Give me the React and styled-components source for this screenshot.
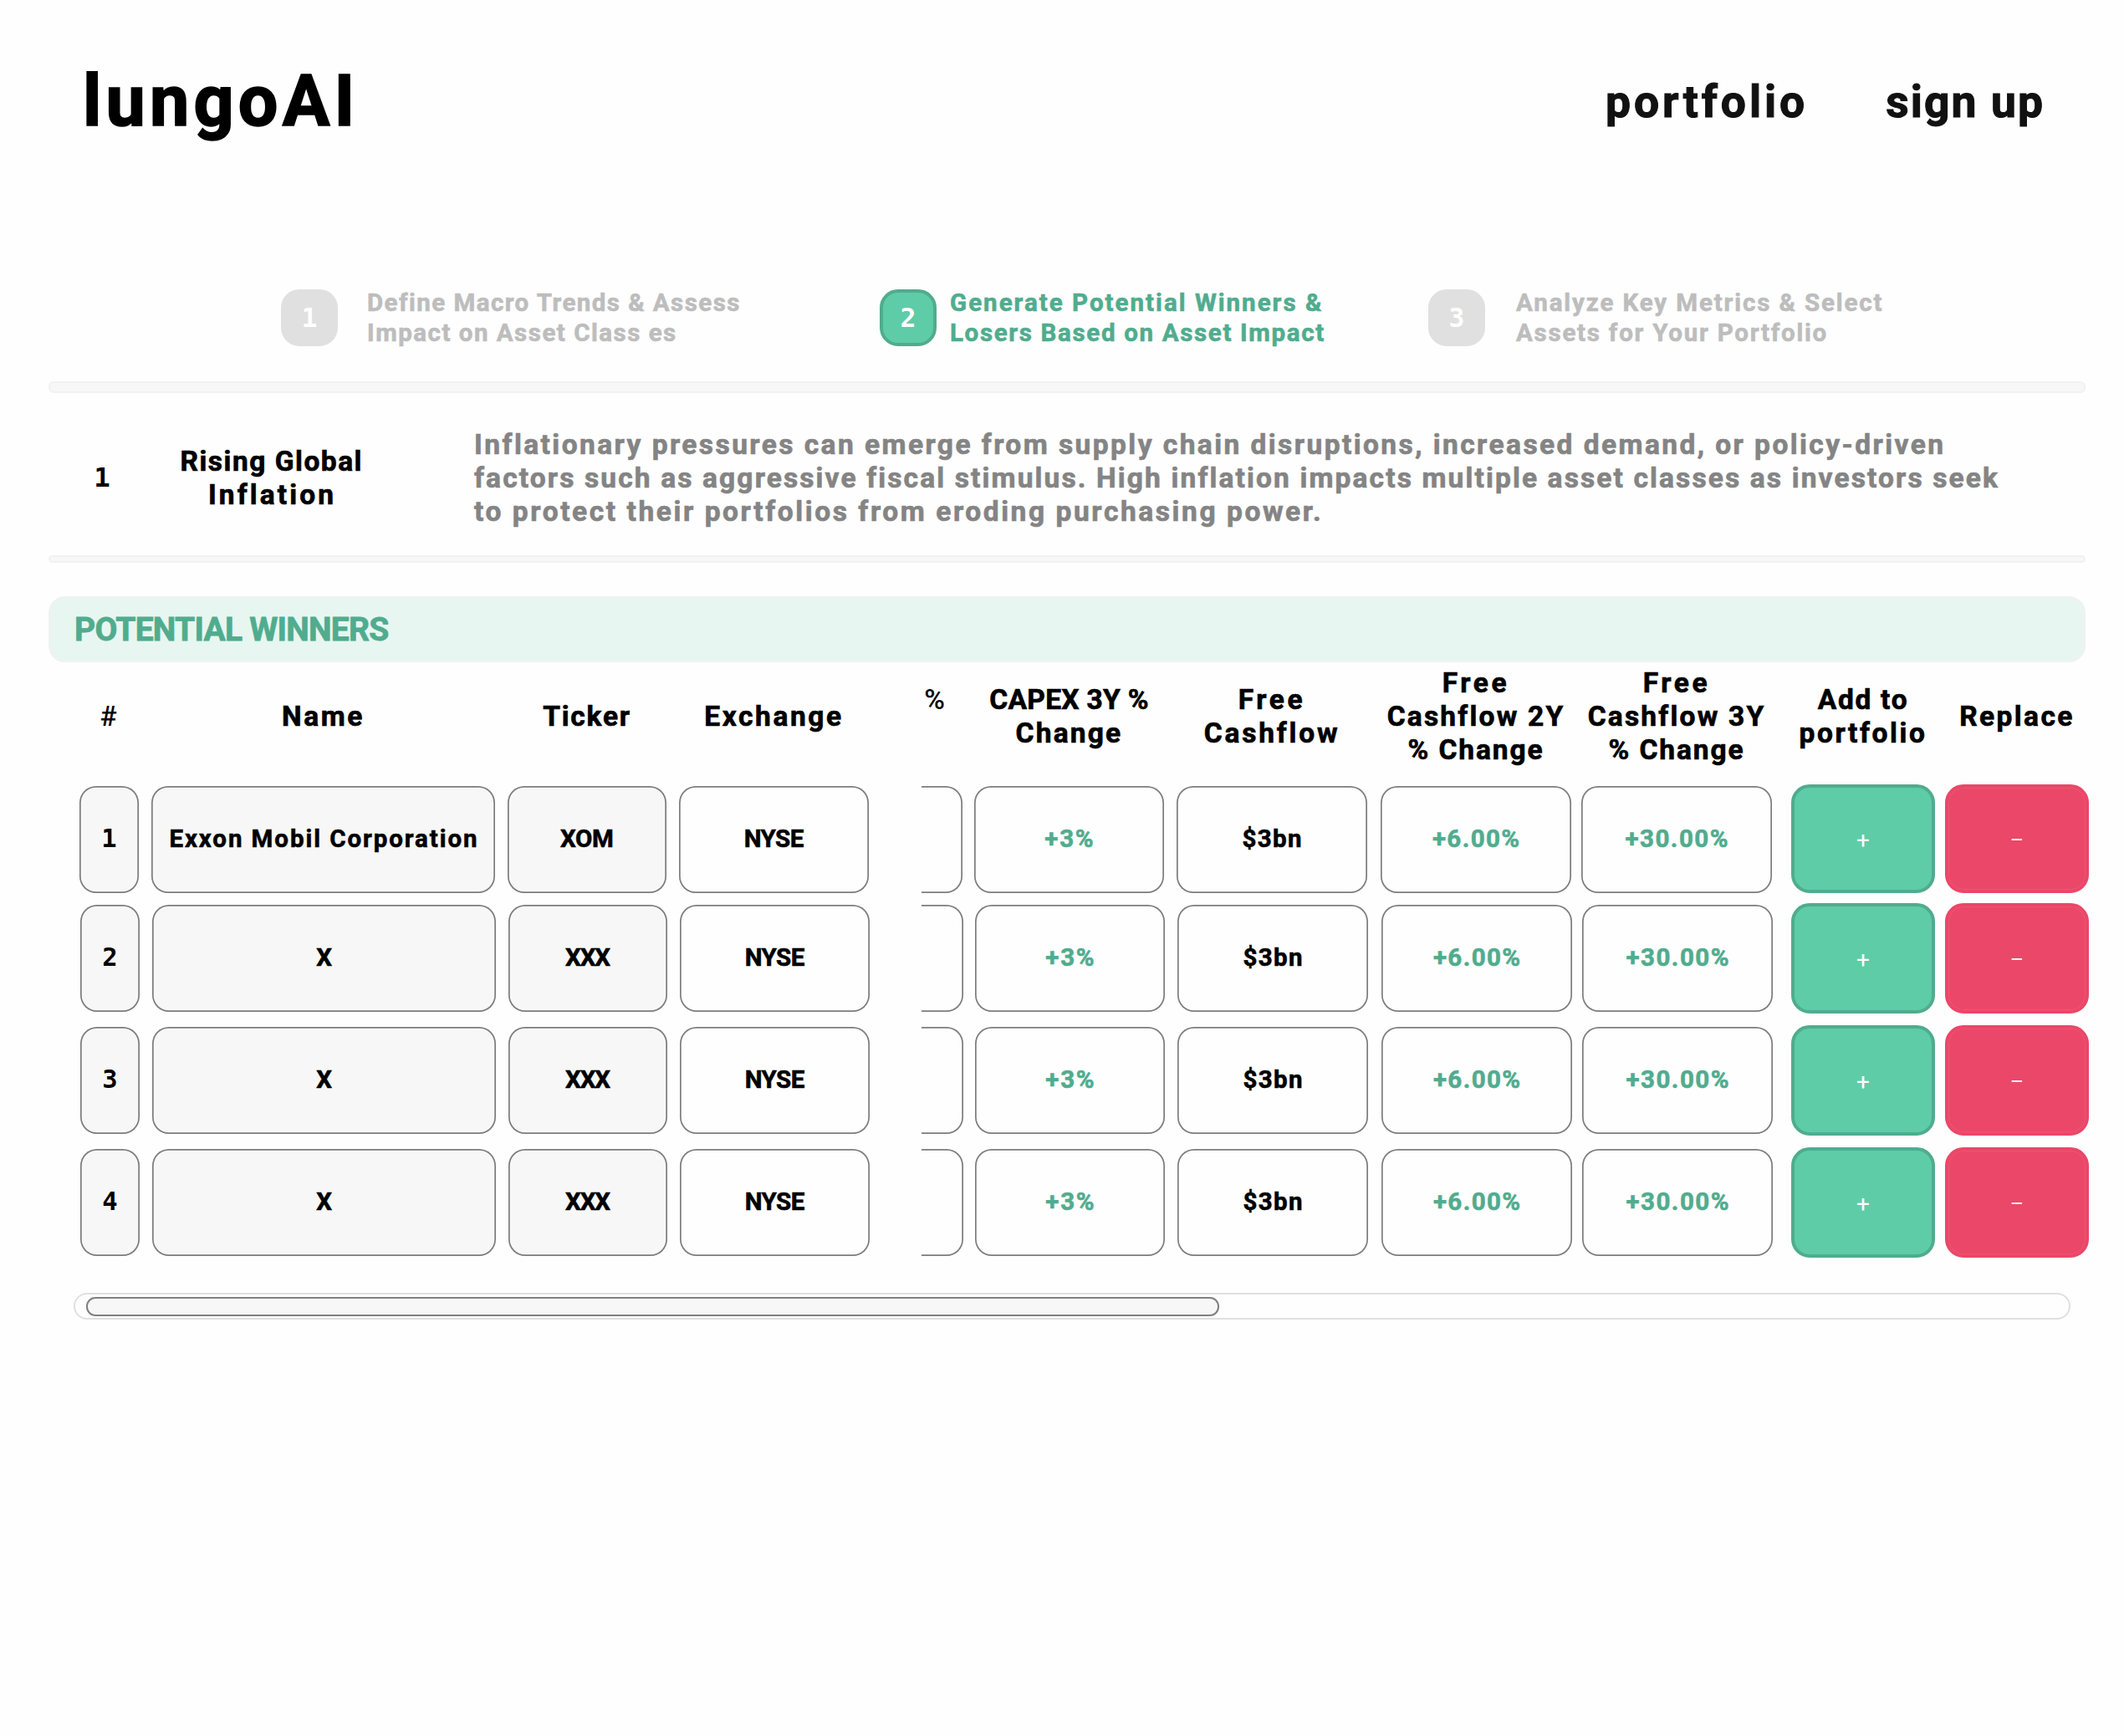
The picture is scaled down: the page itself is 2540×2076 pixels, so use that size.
import React from "react";
import styled, { createGlobalStyle, css } from "styled-components";

const ink = "#000000";
const green = "#50ac8e";
const mint = "#5eCCa7";
const red = "#eb4768";
const paper = "#fefefe";
const wash = "#f7f7f7";
const mono = '"DejaVu Sans Mono", monospace';

const GlobalStyle = createGlobalStyle`
  * { box-sizing: border-box; }
  body {
    margin: 0;
    background: ${paper};
    color: ${ink};
    font-family: Roboto, "Liberation Sans", sans-serif;
    font-weight: 700;
    font-kerning: normal;
  }
`;

const Page = styled.div`
  width: 2540px;
  min-height: 2076px;
  padding: 0 46px 0 58px;
  overflow: hidden;
`;

/* One line of tracked text; the trailing space of the tracking is pulled back. */
const Tracked = styled.span`
  display: block;
  width: max-content;
  white-space: nowrap;
  letter-spacing: ${(p) => p.$ls || 0}px;
  margin-right: ${(p) => -(p.$ls || 0)}px;
  -webkit-text-stroke: ${(p) => (p.$plain ? "0" : "0.02em")};
`;

const Header = styled.header`
  display: flex;
  align-items: center;
  justify-content: space-between;
  height: 243px;
  padding: 0 51px 0 41px;
`;

const Logo = styled.a`
  font-size: 84.4px;
  line-height: 100px;
`;

const Nav = styled.nav`
  display: flex;
  gap: 97px;
  font-size: 53.4px;
  line-height: 64px;
  color: #111;
`;

const Steps = styled.ol`
  display: grid;
  grid-template-columns: 716px 656px auto;
  grid-template-rows: 68px;
  list-style: none;
  margin: 103px 0 42px;
  padding: 0 0 0 278px;
  height: 68px;
`;

const Step = styled.li`
  display: flex;
  align-items: center;
  height: 68px;
  gap: ${(p) => p.$gap}px;
  color: ${(p) => (p.$active ? green : "#bdbdbd")};
  font-size: 29.5px;
  line-height: 36px;
`;

const Badge = styled.span`
  display: flex;
  flex: none;
  align-items: center;
  justify-content: center;
  width: 68px;
  height: 68px;
  border-radius: 22px;
  border: 4px solid ${(p) => (p.$active ? green : "#e0e0e0")};
  background: ${(p) => (p.$active ? mint : "#e0e0e0")};
  color: #fff;
  font: 700 31.5px/36px ${mono};
`;

const Divider = styled.div`
  width: 2436px;
  height: ${(p) => p.$h}px;
  border: 2px solid #f1f1f1;
  border-radius: 6px;
  background: ${wash};
`;

const Trend = styled.section`
  display: grid;
  grid-template-columns: 128px 276px auto;
  align-items: center;
  height: 194px;
  padding-top: 9px;
  font-size: 33.5px;
  line-height: 40px;
`;

const TrendIndex = styled.span`
  padding-bottom: 2px;
  text-align: center;
  font: 700 32.5px/40px ${mono};
`;

const TrendTitle = styled.h2`
  display: flex;
  flex-direction: column;
  align-items: center;
  margin: 0;
  font: inherit;
`;

const TrendText = styled.div`
  padding-left: 105px;
  color: #848484;
`;

const Banner = styled.h3`
  display: flex;
  align-items: center;
  width: 2436px;
  height: 79px;
  margin: 40px 0 0;
  padding-left: 29px;
  border: 2px solid #f1f1f1;
  border-radius: 20px;
  background: #e8f6f1;
  color: ${green};
  font-size: 39px;
  font-weight: 700;
`;

const Table = styled.div`
  display: flex;
  padding-left: 37px;
`;

const Pane = styled.div`
  display: flex;
  flex: none;
`;

const ScrollPane = styled(Pane)`
  width: 1018px;
  margin-left: 63px;
  padding-right: 1px;
  justify-content: flex-end;
  overflow: hidden;
`;

const ActionPane = styled(Pane)`
  margin-left: 22px;
`;

const Column = styled.div`
  flex: none;
  width: ${(p) => p.$w}px;
  margin-left: ${(p) => p.$gap || 0}px;
`;

const Head = styled.div`
  display: flex;
  flex-direction: column;
  align-items: ${(p) => (p.$edge ? "flex-end" : "center")};
  justify-content: center;
  height: 148px;
  padding: 0 ${(p) => (p.$edge ? 21 : p.$light ? 2 : 0)}px 19px 0;
  font-size: 33.5px;
  font-weight: ${(p) => (p.$light ? 500 : 700)};
  line-height: 40px;
`;

const HeadLine = styled(Tracked)`
  min-height: 40px;
  margin-right: 0;
`;

const rowGap = css`
  margin-bottom: ${(p) => [14, 18, 18, 0][p.$row]}px;
`;

const Cell = styled.div`
  display: flex;
  align-items: center;
  justify-content: center;
  height: 128px;
  padding-bottom: 3px;
  border-radius: 20px;
  box-shadow: inset 0 0 0 1.7px #7c7c7c;
  background: ${(p) => (p.$muted ? wash : paper)};
  color: ${(p) => (p.$gain ? green : ink)};
  font-size: 29.5px;
  line-height: 36px;
  transform: translateX(${(p) => (p.$row ? 1 : 0)}px);
  ${(p) => p.$mono && css`font: 700 30.5px/36px ${mono};`}
  ${rowGap}
`;

const Action = styled.button`
  display: flex;
  align-items: center;
  justify-content: center;
  width: 100%;
  height: ${(p) => (p.$row ? 132 : 130)}px;
  margin: -2px 0 0;
  padding: 4px 0 0;
  border: 4px solid ${(p) => (p.$remove ? red : green)};
  border-radius: 22px;
  background: ${(p) => (p.$remove ? red : mint)};
  box-shadow: ${(p) => (p.$remove ? "inset 0 0 0 1px #ed5674" : "none")};
  color: #fff;
  font: 400 ${(p) => (p.$remove ? 25 : 28)}px/32px Roboto, sans-serif;
  margin-bottom: ${(p) => [14, 16, 16, 0][p.$row]}px;
`;

const Scrollbar = styled.div`
  display: flex;
  align-items: center;
  width: 2388px;
  height: 32px;
  margin: 42px 0 0 30px;
  padding-left: 13px;
  border: 2px solid #e0e0e0;
  border-radius: 16px;
`;

const Thumb = styled.div`
  width: 1355px;
  height: 23px;
  border: 2px solid #808080;
  border-radius: 11px;
  background: ${wash};
`;

const steps = [
  { gap: 35, lines: [["Define Macro Trends & Assess", 1.45], ["Impact on Asset Class es", 1.5]] },
  { gap: 16, active: true, lines: [["Generate Potential Winners &", 2.02], ["Losers Based on Asset Impact", 1.66]] },
  { gap: 37, lines: [["Analyze Key Metrics & Select", 1.88], ["Assets for Your Portfolio", 1.76]] },
];

const description = [
  ["Inflationary pressures can emerge from supply chain disruptions, increased demand, or policy-driven", 2.44],
  ["factors such as aggressive fiscal stimulus. High inflation impacts multiple asset classes as investors seek", 2.13],
  ["to protect their portfolios from eroding purchasing power.", 2.58],
];

const same = (text, ls) => Array(4).fill([text, ls]);

const pinned = [
  { w: 71, light: true, muted: true, mono: true, head: [["#", 0]], cells: [["1"], ["2"], ["3"], ["4"]] },
  { w: 411, gap: 15, muted: true, head: [["Name", 2.6]], cells: [["Exxon Mobil Corporation", 1.93], ["X"], ["X"], ["X"]] },
  { w: 190, gap: 15, muted: true, head: [["Ticker", 1.75]], cells: [["XOM", -0.37], ["XXX", -1.2], ["XXX", -1.2], ["XXX", -1.2]] },
  { w: 227, gap: 15, head: [["Exchange", 2.6]], cells: same("NYSE", -0.56) },
];

const metrics = [
  { w: 227, edge: true, light: true, head: [["%", 0], ["", 0]], cells: same("", 0) },
  { w: 227, gap: 14, gain: true, head: [["CAPEX 3Y %", 0.3], ["Change", 2.2]], cells: same("+3%", 1.73) },
  { w: 228, gap: 15, head: [["Free", 3.6], ["Cashflow", 2.8]], cells: same("$3bn", 1.33) },
  { w: 228, gap: 16, gain: true, head: [["Free", 3.6], ["Cashflow 2Y", 2.2], ["% Change", 1.9]], cells: same("+6.00%", 1.4) },
  { w: 228, gap: 12, gain: true, head: [["Free", 3.6], ["Cashflow 3Y", 2.2], ["% Change", 1.9]], cells: same("+30.00%", 1.48) },
];

const actions = [
  { w: 172, sign: "+", head: [["Add to", 1.7], ["portfolio", 2.6]] },
  { w: 172, gap: 12, sign: "–", remove: true, head: [["Replace", 2.4]] },
];

const Heading = ({ col }) => (
  <Head $edge={col.edge} $light={col.light}>
    {col.head.map(([text, ls], i) => <HeadLine key={i} $ls={ls} $plain={col.light}>{text}</HeadLine>)}
  </Head>
);

const DataColumn = ({ col }) => (
  <Column $w={col.w} $gap={col.gap}>
    <Heading col={col} />
    {col.cells.map(([text, ls], row) => (
      <Cell key={row} $row={row} $muted={col.muted} $gain={col.gain} $mono={col.mono}>
        <Tracked $ls={ls} $plain={col.mono}>{text}</Tracked>
      </Cell>
    ))}
  </Column>
);

const ActionColumn = ({ col }) => (
  <Column $w={col.w} $gap={col.gap}>
    <Heading col={col} />
    {[0, 1, 2, 3].map((row) => (
      <Action key={row} $row={row} $remove={col.remove}>{col.sign}</Action>
    ))}
  </Column>
);

export default function App() {
  return (
    <Page>
      <GlobalStyle />
      <Header>
        <Logo><Tracked $ls={5.18}>lungoAI</Tracked></Logo>
        <Nav>
          <Tracked as="a" $ls={3.94}>portfolio</Tracked>
          <Tracked as="a" $ls={2.1}>sign up</Tracked>
        </Nav>
      </Header>

      <Steps>
        {steps.map((step, i) => (
          <Step key={i} $gap={step.gap} $active={step.active}>
            <Badge $active={step.active}>{i + 1}</Badge>
            <div>
              {step.lines.map(([text, ls]) => <Tracked key={text} $ls={ls}>{text}</Tracked>)}
            </div>
          </Step>
        ))}
      </Steps>

      <Divider $h={14} />
      <Trend>
        <TrendIndex>1</TrendIndex>
        <TrendTitle>
          <Tracked $ls={1.5}>Rising Global</Tracked>
          <Tracked $ls={3.1}>Inflation</Tracked>
        </TrendTitle>
        <TrendText>
          {description.map(([text, ls]) => <Tracked key={text} $ls={ls}>{text}</Tracked>)}
        </TrendText>
      </Trend>
      <Divider $h={9} />

      <Banner><Tracked $ls={-0.75}>POTENTIAL WINNERS</Tracked></Banner>
      <Table>
        <Pane>{pinned.map((col, i) => <DataColumn key={i} col={col} />)}</Pane>
        <ScrollPane>{metrics.map((col, i) => <DataColumn key={i} col={col} />)}</ScrollPane>
        <ActionPane>{actions.map((col, i) => <ActionColumn key={i} col={col} />)}</ActionPane>
      </Table>
      <Scrollbar><Thumb /></Scrollbar>
    </Page>
  );
}
